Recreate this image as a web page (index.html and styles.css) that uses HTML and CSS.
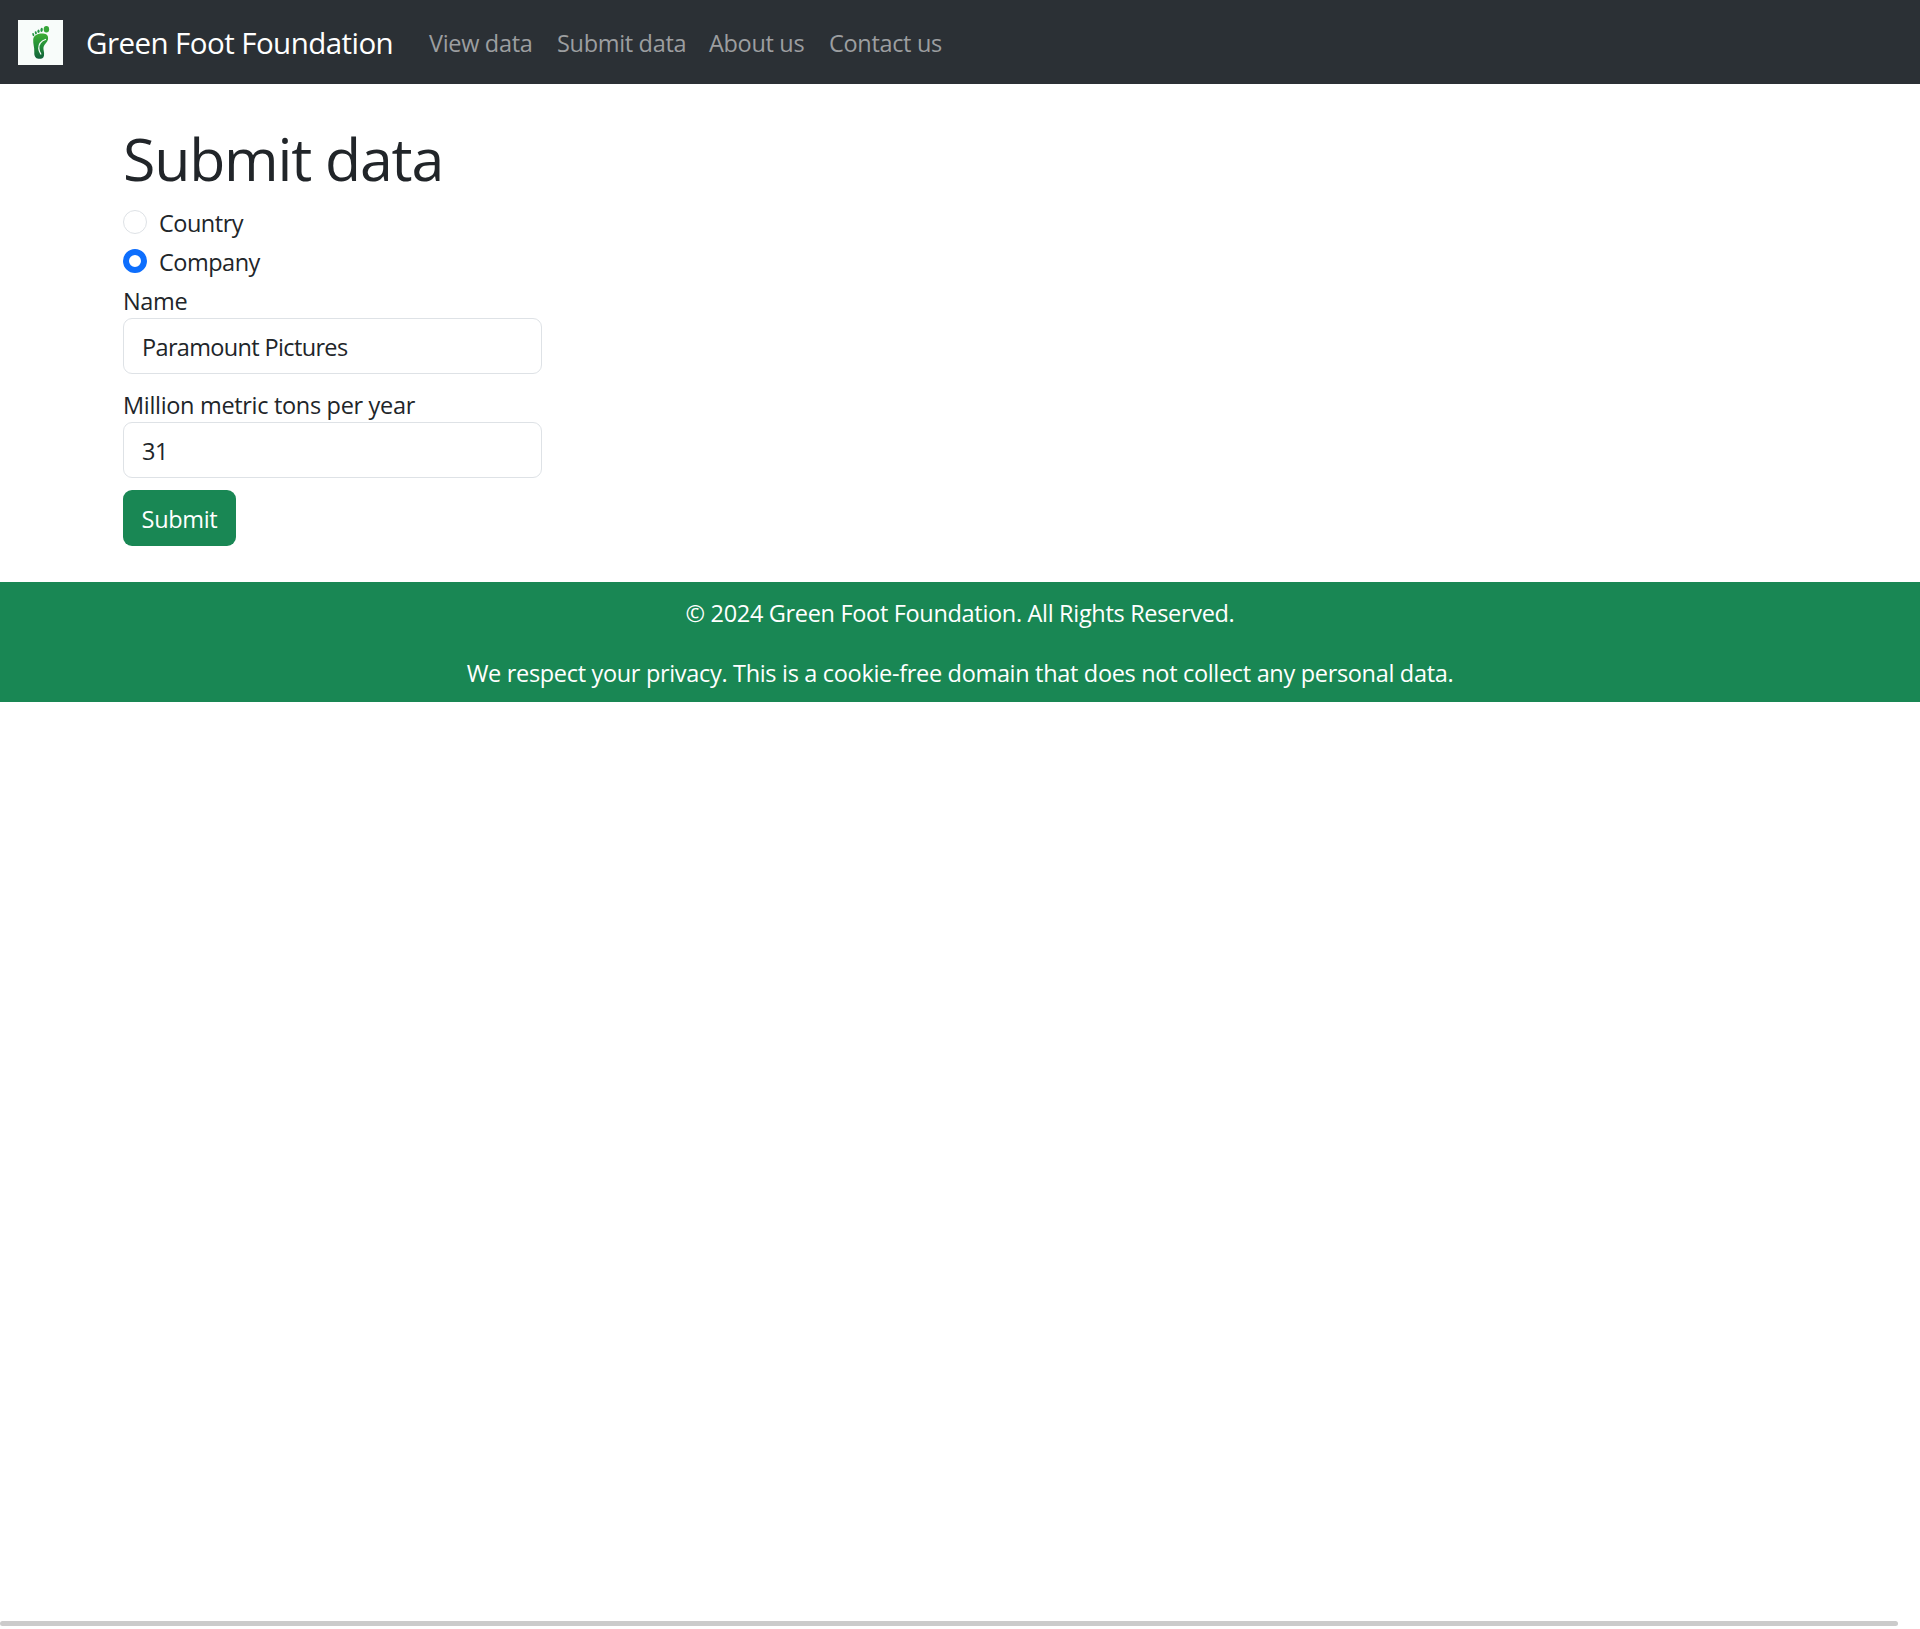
FILE: index.html
```html
<!DOCTYPE html>
<html lang="en">
<head>
<meta charset="utf-8">
<title>Green Foot Foundation</title>
<link rel="stylesheet" href="styles.css">
</head>
<body>
<nav class="navbar">
  <svg class="logo" viewBox="0 0 45 45" aria-hidden="true">
    <defs><linearGradient id="leaf" x1="0" y1="0" x2="0" y2="1"><stop offset="0" stop-color="#3fae35"/><stop offset=".45" stop-color="#259238"/><stop offset="1" stop-color="#12603a"/></linearGradient></defs>
    <rect width="45" height="45" fill="#f8fcfa"/>
    <path fill="url(#leaf)" d="M15.2 19.5C15.5 15.5 20 13.5 25 13.6C29 13.7 30.6 16 30 19.5C29.4 22.5 26.3 24 25.5 27C25 29.5 26.5 32 26 35.500C25.600 38.500 23 39 20.500 38.800C17.500 38.600 16 36 16.300 32C16.600 27.500 14.900 24 15.200 19.500Z"/>
    <path fill="none" stroke="#f8fcfa" stroke-width="1.300" stroke-linecap="round" d="M27.500 19.500C23 21 20.700 24.500 20.800 28.500C20.900 30.500 21.500 32 22.800 34"/>
    <ellipse cx="28.400" cy="9.300" rx="2.700" ry="3.300" fill="#35a637"/>
    <g fill="#239342"><ellipse cx="23.600" cy="9.800" rx="1.200" ry="2.100" transform="rotate(8 23.600 9.800)"/><ellipse cx="20.500" cy="11.200" rx="1.100" ry="1.800"/><ellipse cx="17.800" cy="12.800" rx="1" ry="1.600" transform="rotate(-15 17.800 12.800)"/><ellipse cx="15.300" cy="14.600" rx=".9" ry="1.600" transform="rotate(-20 15.300 14.600)"/></g>
  </svg>
  <a class="brand">Green Foot Foundation</a>
  <div class="links">
    <a class="link view">View data</a>
    <a class="link submit-link">Submit data</a>
    <a class="link about">About us</a>
    <a class="link contact">Contact us</a>
  </div>
</nav>
<main class="content">
  <h1 class="title">Submit data</h1>
  <form class="form">
    <label class="check"><input class="radio" type="radio" name="kind"><span class="check-text">Country</span></label>
    <label class="check"><input class="radio" type="radio" name="kind" checked><span class="check-text">Company</span></label>
    <label class="label" for="name">Name</label>
    <input class="field name-field" id="name" type="text" value="Paramount Pictures">
    <label class="label" for="tons">Million metric tons per year</label>
    <input class="field" id="tons" type="text" value="31">
    <button class="button" type="button">Submit</button>
  </form>
</main>
<footer class="footer">
  <p class="copyright">© 2024 Green Foot Foundation. All Rights Reserved.</p>
  <p class="privacy">We respect your privacy. This is a cookie-free domain that does not collect any personal data.</p>
</footer>
<div class="scrollbar"></div>
</body>
</html>
```
FILE: styles.css
```css
* { box-sizing: border-box; }
body {
  margin: 0;
  min-height: 1629px;
  display: flex;
  flex-direction: column;
  background: #fff;
  color: #212529;
  font: 23.5px/34px "Open Sans", sans-serif;
  letter-spacing: -0.32px;
}
.navbar {
  display: flex;
  align-items: center;
  height: 84px;
  padding: 0 18px;
  background: #2b3035;
}
.logo { width: 45px; height: 45px; margin-top: 1px; }
.brand { width: 307px; margin-left: 23px; color: #fff; font-size: 29.5px; line-height: 45px; letter-spacing: -0.55px; white-space: nowrap; }
.links { display: flex; gap: 24px; margin-left: 36px; padding-top: 2px; }
.link { color: #9c9ea0; white-space: nowrap; }
.view { width: 104px; }
.submit-link { width: 128px; }
.about { width: 96px; }
.content { padding: 36px 123px; }
.title { margin: 0 0 12px; padding-top: 4px; font-size: 59px; font-weight: 400; line-height: 68px; letter-spacing: -1.2px; }
.form { display: flex; flex-direction: column; align-items: flex-start; }
.check { display: flex; gap: 12px; margin-bottom: 3px; }
.check-text { padding-top: 2px; letter-spacing: -0.5px; }
.label { padding-top: 2px; }
.radio {
  appearance: none;
  width: 24px;
  height: 24px;
  margin: 6px 0 0;
  border: 1px solid #dee2e6;
  border-radius: 50%;
  background: #fff;
}
.radio:checked { border: 6px solid #0d6efd; }
.field {
  width: 419px;
  height: 56px;
  margin-bottom: 12px;
  padding: 2px 18px 0;
  border: 1px solid #dee2e6;
  border-radius: 9px;
  color: inherit;
  font: inherit;
  letter-spacing: inherit;
}
.name-field { letter-spacing: -0.65px; }
.button {
  width: 113px;
  height: 56px;
  padding: 2px 0 0;
  border: 0;
  border-radius: 9px;
  background: #198754;
  color: #fff;
  font: inherit;
  letter-spacing: inherit;
}
.footer { padding: 12px; background: #198754; color: #fff; text-align: center; }
.footer p { margin: 0; padding-top: 2px; }
.footer .copyright { margin-bottom: 24px; }
.scrollbar { width: 1898px; height: 5px; margin-top: auto; margin-bottom: 3px; border-radius: 3px; background: #cbcbcb; }
```
